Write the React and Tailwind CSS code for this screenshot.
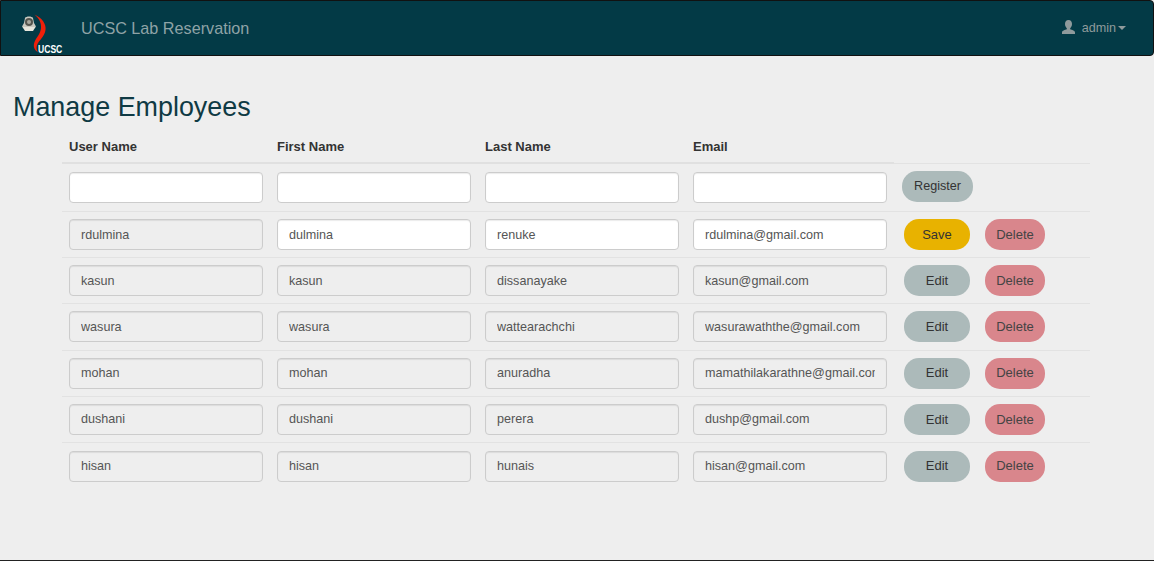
import React from 'react';

const employees = [
  { user: 'rdulmina', first: 'dulmina', last: 'renuke', email: 'rdulmina@gmail.com', editing: true },
  { user: 'kasun', first: 'kasun', last: 'dissanayake', email: 'kasun@gmail.com' },
  { user: 'wasura', first: 'wasura', last: 'wattearachchi', email: 'wasurawaththe@gmail.com' },
  { user: 'mohan', first: 'mohan', last: 'anuradha', email: 'mamathilakarathne@gmail.com' },
  { user: 'dushani', first: 'dushani', last: 'perera', email: 'dushp@gmail.com' },
  { user: 'hisan', first: 'hisan', last: 'hunais', email: 'hisan@gmail.com' },
];

function Field({ value = '', editable }) {
  return (
    <input
      readOnly
      value={value}
      className={`w-[194px] h-[31px] px-[11px] rounded-[4px] border border-[#cccccc] text-[12.6px] text-[#555555] outline-none shadow-[inset_0_1px_1px_rgba(0,0,0,0.08)] ${editable ? 'bg-white' : 'bg-[#eeeeee]'}`}
    />
  );
}

function Logo() {
  return (
    <svg width="30" height="40" viewBox="0 0 30 40" className="shrink-0">
      {/* crest */}
      <path d="M4 5 C5 3 11 3 12 5 L13 10 L15 13.500 L13 15.500 L3 15.500 L1 13.500 L3 10 Z" fill="#c9c9c0" />
      <circle cx="8" cy="9" r="4" fill="#55554e" />
      <circle cx="8" cy="9" r="2" fill="#a8a89e" />
      <path d="M1.500 14 L14.500 14 L12 18 L4 18 Z" fill="#e6e6dc" />
      {/* swoosh */}
      <path d="M13.500 1.500 C21 5 25.500 11 24.500 17 C23.500 24 18 27 16 32 C15.200 35 15.500 37 17 39 C13 37 12 33 13.500 29 C15.500 24 19.500 21 20 15 C20.500 10 18 5 13.500 1.500 Z" fill="#f0200a" />
    </svg>
  );
}

export default function App() {
  return (
    <div className="w-[1154px] h-[561px] overflow-hidden bg-[#eeeeee] font-['Liberation_Sans',Arial,sans-serif] border-b border-[#222222]">
      {/* Navbar */}
      <div className="h-[56px] bg-[#033a46] border border-[#111111] rounded-r-[4px] flex items-center justify-between">
        <div className="flex items-center">
          <div className="relative w-[80px] h-[54px] pl-[20px] pt-[12px]">
            <Logo />
            <span className="absolute left-[37px] top-[42px] text-[11px] leading-[12px] font-bold text-white origin-left scale-x-[0.78]">UCSC</span>
          </div>
          <span className="text-[16.2px] text-[#8fa3a6]">UCSC Lab Reservation</span>
        </div>
        <div className="flex items-center pr-[27px] text-[#8f9a9c] text-[12.6px]">
          <svg width="13" height="14" viewBox="0 0 13 14" className="mr-[7px] mb-[2px]">
            <path d="M6.500 0 C9 0 10 2 10 4 C10 6 9 7.500 8.200 8.300 L8.200 9.200 C10 10 13 10.500 13 12.500 L13 14 L0 14 L0 12.500 C0 10.500 3 10 4.800 9.200 L4.800 8.300 C4 7.500 3 6 3 4 C3 2 4 0 6.500 0 Z" fill="#8f9a9c" />
          </svg>
          <span>admin</span>
          <span className="ml-[2px] w-0 h-0 border-x-[4px] border-x-transparent border-t-[4px] border-t-[#8f9a9c]" />
        </div>
      </div>

      <h2 className="pl-[13px] pt-[33px] text-[26.9px] leading-[36px] text-[#0f3a44]">Manage Employees</h2>

      {/* Employee table */}
      <div className="ml-[62px] w-[1028px] mt-[2px]">
        <div className="flex h-[37px]">
          {['User Name', 'First Name', 'Last Name', 'Email'].map(h => (
            <div key={h} className="w-[208px] h-full pl-[7px] pt-[11px] border-b-2 border-[#e0e0e0] text-[13px] font-bold text-[#333333] leading-[18px]">{h}</div>
          ))}
        </div>
        <div className="flex h-[49px] items-center pl-[7px] gap-[14px] border-b border-[#e2e2e2] -mt-px border-t">
          <Field editable />
          <Field editable />
          <Field editable />
          <Field editable />
          <button className="h-[31px] w-[71px] -mt-[2px] ml-px rounded-[15px] bg-[#acbaba] text-[12.6px] text-[#333333]">Register</button>
        </div>
        {employees.map(e => (
          <div key={e.user} className="flex h-[46.2px] items-center pl-[7px] gap-[14px] border-b border-[#e2e2e2] last:border-b-0">
            <Field value={e.user} />
            <Field value={e.first} editable={e.editing} />
            <Field value={e.last} editable={e.editing} />
            <Field value={e.email} editable={e.editing} />
            <button className={`h-[31px] w-[66px] ml-[3px] rounded-[15px] text-[13px] text-[#333333] ${e.editing ? 'bg-[#e8b200]' : 'bg-[#acbaba]'}`}>{e.editing ? 'Save' : 'Edit'}</button>
            <button className="h-[31px] w-[60px] ml-px rounded-[15px] bg-[#d9868c] text-[13px] text-[#444444]">Delete</button>
          </div>
        ))}
      </div>
    </div>
  );
}
